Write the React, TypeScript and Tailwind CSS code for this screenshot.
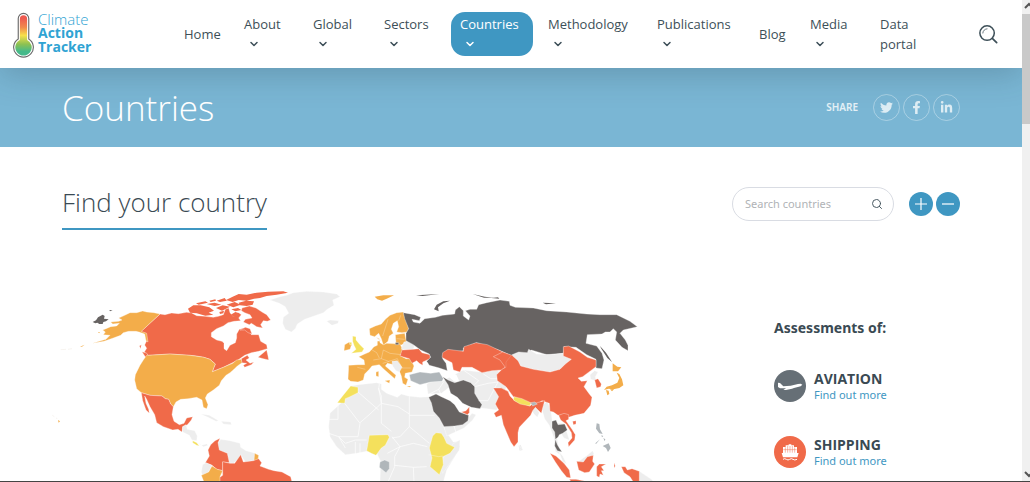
import { FaFacebookF, FaLinkedinIn, FaTwitter } from "react-icons/fa";
import { FiChevronDown, FiSearch } from "react-icons/fi";

type NavItemType = {
    label: string
    width: string
    menu?: boolean
    active?: boolean
}
const navItems: NavItemType[] = [
    { label: "Home", width: "w-[60px]" },
    { label: "About", width: "w-[69px]", menu: true },
    { label: "Global", width: "w-[71px]", menu: true },
    { label: "Sectors", width: "w-[76px]", menu: true },
    { label: "Countries", width: "w-[88px]", menu: true, active: true },
    { label: "Methodology", width: "w-[109px]", menu: true },
    { label: "Publications", width: "w-[102px]", menu: true },
    { label: "Blog", width: "w-[51px]" },
    { label: "Media", width: "w-[70px]", menu: true },
    { label: "Data portal", width: "w-[62px]" },
]

const Logo = () => (
    <a href="#home" className="flex w-[162px] shrink-0 items-center gap-1 pt-[2px] pl-[13px] text-[#2fa3d3]">
        <svg viewBox="0 0 64 138" className="h-[46px] w-[21px]" aria-hidden="true">
            <defs>
                <linearGradient id="thermo" x1="0" y1="0" x2="0" y2="1">
                    <stop offset="0.08" stopColor="#ee5b50" />
                    <stop offset="0.3" stopColor="#f18a4c" />
                    <stop offset="0.5" stopColor="#f7e04a" />
                    <stop offset="0.72" stopColor="#8cc152" />
                    <stop offset="0.9" stopColor="#45b98a" />
                </linearGradient>
            </defs>
            <path d="M16 19a16 16 0 0 1 32 0v62a30 30 0 1 1-32 0z" fill="#fff" stroke="#6b6b6b" strokeWidth="3.5" />
            <path d="M21 20a11 11 0 0 1 22 0v64a25 25 0 1 1-22 0z" fill="url(#thermo)" />
        </svg>
        <span className="pb-1 text-[14px] leading-[14px]">
            <span className="block text-[15px] font-light">Climate</span>
            <span className="block font-bold">Action</span>
            <span className="block font-bold">Tracker</span>
        </span>
    </a>
)

const NavItem = ({ item }: { item: NavItemType }) => (
    <li className={`shrink-0 ${item.width}`}>
        <a
            href="#nav"
            className={`block text-[13px] leading-5 ${item.active ? "mr-[6px] rounded-[14px] bg-[#3f97c2] py-[2px] pl-[9px] text-white" : "pl-[9px] pr-1"}`}
        >
            {item.label}
            {item.menu && (
                <span className="flex h-5 items-center pl-1">
                    <FiChevronDown className="h-3 w-3" strokeWidth={3} />
                </span>
            )}
        </a>
    </li>
)

const Header = () => (
    <header className="relative z-10 flex h-[68px] shrink-0 items-center bg-white text-[#3d4f58] shadow-[0_6px_32px_rgba(40,60,75,0.26)]">
        <Logo />
        <nav className="ml-[13px]">
            <ul className="flex items-center">
                {navItems.map((item) => (<NavItem key={item.label} item={item} />))}
            </ul>
        </nav>
        <button type="button" aria-label="Search" className="mr-6 ml-auto">
            <svg viewBox="0 0 20 20" className="h-[19px] w-[19px]" fill="none" stroke="currentColor" strokeLinecap="round">
                <circle cx="8.5" cy="8.5" r="7.6" strokeWidth="1.6" />
                <path d="M14 14l4.6 4.6" strokeWidth="1.8" />
                <path d="M4 8.5A4.5 4.5 0 0 1 8.5 4" strokeWidth="0.8" />
            </svg>
        </button>
    </header>
)

const shareLinks = [
    { label: "Twitter", Icon: FaTwitter },
    { label: "Facebook", Icon: FaFacebookF },
    { label: "LinkedIn", Icon: FaLinkedinIn },
]

const Hero = () => (
    <div className="flex h-[79px] shrink-0 items-center justify-between bg-[#7ab6d4] px-[62px] text-white">
        <h1 className="text-[35px] leading-10 font-light">Countries</h1>
        <div className="flex items-center gap-[3px]">
            <span className="mr-3 font-['Noto_Sans',sans-serif] text-[10px] font-semibold text-white/80">SHARE</span>
            {shareLinks.map(({ label, Icon }) => (
                <a key={label} href="#share" aria-label={label} className="flex h-[27px] w-[27px] items-center justify-center rounded-full border border-white/35 text-white/75">
                    <Icon className="h-[13px] w-[13px]" />
                </a>
            ))}
        </div>
    </div>
)

const SearchRow = () => (
    <div className="flex items-start justify-between px-[62px] pt-10">
        <h2 className="border-b-2 border-[#3f97c2] pb-[10px] text-[26px] leading-[31px] font-light text-[#3a4a53]">Find your country</h2>
        <div className="flex items-center">
            <label className="mr-[15px] flex h-[34px] w-[162px] items-center rounded-full border border-[#d9dce3] pr-[10px] pl-3">
                <input type="text" aria-label="Search countries" placeholder="Search countries" className="min-w-0 flex-1 font-['Noto_Sans',sans-serif] text-[11px] outline-none placeholder:text-[#b0b3b6]" />
                <FiSearch className="h-3 w-3 text-[#4a5a63]" />
            </label>
            <button type="button" aria-label="Zoom in" className="mr-[3px] flex h-6 w-6 items-center justify-center rounded-full bg-[#3f97c2]">
                <svg viewBox="0 0 24 24" className="h-6 w-6" stroke="#fff" strokeWidth="1.2"><path d="M6 12h12M12 6v12" /></svg>
            </button>
            <button type="button" aria-label="Zoom out" className="flex h-6 w-6 items-center justify-center rounded-full bg-[#3f97c2]">
                <svg viewBox="0 0 24 24" className="h-6 w-6" stroke="#fff" strokeWidth="1.2"><path d="M6 12h12" /></svg>
            </button>
        </div>
    </div>
)

const grey = "#ededed"
const red = "#f06a49"
const amber = "#f3ad4a"
const yellow = "#f4e05c"
const dark = "#676362"
const steel = "#b0b6ba"

const WorldMap = () => (
    <svg viewBox="0 0 2169 606" className="w-full" role="img" aria-label="World map of climate ratings" stroke="#fff" strokeWidth="1" strokeLinejoin="round">
        {/* North America */}
        <g>
            <path fill={red} d="M330 102L345 104 365 99 385 101 410 97 425 99 440 107 465 109 490 112 505 109 520 104 526 88 536 84 540 98 548 108 560 106 566 98 574 104 566 114 572 122 552 124 534 128 520 138 500 146 484 158 484 170 500 180 516 184 522 190 522 206 530 212 540 196 556 188 560 174 560 162 568 148 584 144 598 150 604 164 626 164 632 184 650 194 652 206 626 214 604 218 584 226 564 240 540 252 520 262 487 275 492 262 496 252 480 238 462 232 440 228 420 226 360 222 295 226 283 216 290 205 284 195 290 182 288 160 270 157z" />
            <path fill={red} d="M574 236L592 226 598 234 588 240 600 250 612 246 604 254 584 262 580 256 590 250 574 248zM624 232L650 210 654 228 656 240 640 236zM276 215l15 5 5 10-10 1zM268 198l6-4-2 12z" />
            <path fill={red} d="M576 84L598 78 618 84 636 96 650 104 662 120 652 124 640 122 632 134 638 144 620 140 604 130 598 134 580 126 586 118 606 114 600 104 584 98 574 92zM570 150l16-8 14 4 6 16-12-4-10-8z" />
            <path fill={red} stroke="none" d="M528 60L548 50 566 42 590 44 620 38 654 35 700 34 714 38 680 44 650 48 630 54 612 56 590 62 566 60 548 66zM566 68L588 62 612 64 608 74 590 78 570 76zM414 86L430 76 452 76 478 82 492 92 476 98 490 104 466 107 440 100 420 98zM470 72l24-4 20 6-20 4zM498 84l20-8 22 4-24 12zM438 70l28-6 8 4-28 6zM530 74l24-8 18 8-22 8zM500 62l24-8 6 8-20 4zM540 106l16-10 12 4-10 10zM544 88l20-4 10 6-18 4zM478 62l18-4 2 4-16 4zM508 96l14-4-2 8-10 2z" />
            <path fill={amber} d="M330 102L312 98 290 96 278 93 260 98 240 98 224 106 206 114 216 120 206 124 182 126 188 132 208 130 200 138 182 140 168 146 158 150 166 156 160 164 180 166 168 178 140 186 128 190 162 184 190 174 212 166 220 158 236 154 258 154 270 157 284 162 288 182 294 186 290 160 274 154z" />
            <path fill={amber} d="M290 226L295 226 360 222 420 226 462 232 480 238 496 252 492 262 487 275 520 262 548 250 560 240 574 238 576 248 562 258 552 268 540 278 528 286 514 302 508 316 490 330 472 342 466 354 474 374 470 386 460 382 456 360 440 352 414 356 392 358 378 366 370 380 362 372 356 358 346 356 336 348 300 346 274 338 260 326 254 300 256 284 270 256 280 240z" />
            <path fill={red} d="M274 338L300 346 336 348 346 356 356 358 362 372 370 380 366 404 372 424 388 434 402 430 410 414 428 410 424 420 412 434 398 440 396 456 384 448 368 450 340 440 320 428 314 404 300 380 290 358 284 348 288 370 296 388 298 400 288 390 278 362z" />
            <path fill={grey} d="M398 440l10-6 4 14 22 4 8 16-2 14-14-2-8-14-20-10zM440 486l10 6 10 8 14-4-4-4-16 4zM452 402l26 4 28 16-8 2-24-12zM514 424l28 2 2 8-24-2z" />
            <path fill={yellow} d="M428 482l12 6 8 10-8-2-12-8z" />
            <path fill={dark} stroke="none" d="M128 126l10-5 6-9 14-8 6 4-2 8 14 2-8 6-8 2-2 6-10 0-6-4-6 2zM178 90l10 1-8 3z" />
            <path fill={amber} stroke="none" d="M24 420l6 4-4 4zM144 156l6 1-3 3zM90 200l14-6-8 6z" />
            <path fill="none" d="M32 209l16-1M54 208l12-2M7 406l6 4M18 414l4 2" stroke="#e6ddd0" />
        </g>
        {/* Greenland and South America */}
        <g transform="translate(420 0)">
            <path fill={grey} d="M240 60L270 50 290 46 310 38 350 34 400 36 440 42 450 50 428 60 432 76 412 88 400 98 372 108 344 118 322 132 316 146 304 156 286 148 278 130 280 112 296 100 286 80 268 70zM410 124l10-4 26 2-2 8-18 6z" />
            <path fill={grey} d="M92 478L120 482 150 490 152 502 168 512 190 518 200 524 192 542 166 546 154 528 130 550 116 548 112 520 86 510 84 490z" />
            <path fill={red} d="M90 475L75 482 62 494 54 510 58 528 46 548 66 556 80 568 98 572 98 546 118 548 112 520 88 510 84 488z" />
            <path fill={grey} d="M48 548l18 8-10 20-18 10-4-10 4-22z" />
            <path fill={amber} d="M34 586l22-10 10-18 16 10 16 4-8 18 4 16H42zM194 520l12 6-2 14-12 2z" />
            <path fill={red} d="M98 545L120 550 134 550 152 524 160 546 190 542 206 536 215 548 210 558 236 568 252 572 276 576 302 590 306 606 90 606 90 592 98 586z" />
        </g>
        {/* Europe and West Africa */}
        <g transform="translate(810 0)">
            <path fill={grey} d="M92 318L116 314 170 308 184 312 184 328 200 340 232 352 244 342 264 348 300 352 330 350 340 380 362 420 376 452 400 486 414 484 420 500 404 530 380 570 370 606 180 606 182 544 170 520 140 514 110 520 76 524 50 500 30 470 26 440 30 400 64 368z" />
            <path fill={yellow} d="M92 318L114 322 114 338 90 350 76 356 74 370 52 368 66 350z" />
            <path fill="none" strokeWidth="2" d="M114 336l62 54M176 324l8 46 50 10 34 22M178 312l-2 16 8 20v22l-34 32-30 26M54 372v46H26M74 370l46 60-6 40H56M184 370v60l30 24M268 348v58h76M268 406v34l-28 30-24 4M216 470l24 30-38 20M268 440l60 50M240 500l40-10 42 10M26 460l30 10 20 34M56 470l20 20 30-10 34 0M106 486v36M120 490v30M240 500l-16 30v30l-20 46M224 556l56 6 2 44M280 562l40-2" />
            <path fill={yellow} d="M148 466L204 464 208 472 196 496 184 504 168 526 154 520 140 512z" />
            <path fill={steel} d="M180 546l14-6 14 6 0 20-10 12-20-16z" />
            <path fill={amber} d="M164 50l26-4 32 0-22 10-14 6-14-4z" stroke="none" />
            <path fill={amber} d="M250 96L230 98 210 106 196 118 184 132 166 138 148 146 150 166 164 170 176 160 184 176 190 196 204 184 208 168 220 160 214 148 220 130 232 122 236 140 230 156 246 158 262 156 266 146 260 124 254 110zM226 164l28-4 6 28-18 8-14-6z" />
            <path fill={amber} d="M168 172l10 4 2 12 10 6 10-4 40 2 8 16-6 20 16 8 14 0 10 22-6 18-20 4-2 12 10 6-6 18-10-6-4-22-8-20-14-14-20-4-6 8 14 12 18 16-4 10-16-14-18-16-12-12-22 4-8 10-14 14-4 18-16 6-22-2-8-6 2-42 28-2 20 0-2-14-16-10 18-8 14-6 14-16 10-4 0-12 10-2zM194 302l16-2-2 10zM168 276l8-2v16l-8-2zM260 318l14 0-6 4z" />
            <path fill={dark} d="M226 188h10v6h-10z" />
            <path fill={amber} d="M74 194l14-8 6 10-4 12-18 4z" />
            <path fill={yellow} d="M98 168l10 2 0 10 12 14 12 12-6 10-32 4 14-12-6-12-4-12zM88 188l6-2 2 8-6 1z" />
            <path fill={grey} d="M252 186l18-4 14 12-4 14-36 0 4-14zM216 244l16-2 14 20-8 14-10-4-10-14z" />
            <path fill={red} d="M246 210L280 208 296 206 306 218 330 224 330 236 308 246 308 256 298 250 290 242 276 250 268 236 240 228z" />
            <path fill="none" strokeWidth="1" opacity="0.8" d="M204 118l-16 50M236 122l6-16M150 206l20 12 8 16M160 240l24-4 6-26 20 10 34 4M184 236l22 8 26-8M188 250l20-6M76 262l8 6-4 38M112 262l24 6M232 236l14 28h26M230 176l24 2" />
        </g>
        {/* Russia, Middle East and Central Asia */}
        <g transform="translate(1050 0)">
            <path fill={grey} d="M80 312L96 304 128 304 140 296 190 270 240 276 290 270 330 300 310 340 290 390 244 384 200 374 150 320 124 340 84 342zM132 440l28-4 46-24 10-12 12 4-10 16-26 24-52 24zM160 490l20-10-2 30-50 70-10-30z" />
            <path fill="#fff" stroke="none" d="M132 252l18-6 12 12-6 18 14 10 10 22-18-4-16-14z" />
            <path fill={dark} d="M10 98L44 104 62 112 58 122 36 118 40 126 60 130 74 116 106 112 128 106 164 102 166 90 178 80 190 92 190 108 206 120 210 108 196 92 210 88 230 88 236 74 260 68 300 60 328 64 330 76 346 82 400 84 440 92 500 96 560 102 600 104 650 104 690 124 712 140 696 144 670 150 660 160 676 180 684 196 684 212 666 202 646 180 650 156 640 146 630 156 616 156 606 162 562 164 558 190 590 198 606 220 612 240 606 266 588 264 588 238 560 224 528 202 492 200 490 220 440 224 394 210 384 222 350 220 336 228 296 210 264 200 230 188 190 204 190 212 130 220 128 236 138 250 142 272 118 264 88 256 80 244 92 232 88 222 62 210 40 194 18 182 18 160 26 146 14 116z" />
            <path fill={dark} stroke="none" d="M102 88l8-14 20-10 20-2-20 8-16 12 2 12zM218 42l36 8 28 3-30 0zM274 54l20-2 4 4zM48 46l70-4-50 6zM600 198l18 20 18 28-14-12-18-28zM428 68l40 2-30 3z" />
            <path fill={red} d="M128 218L144 208 190 214 192 200 228 188 262 194 296 210 330 226 334 226 330 240 320 258 306 270 276 272 246 278 216 262 186 262 180 276 160 270 156 248 140 240 126 232z" />
            <path fill={steel} d="M28 284L60 276 92 280 118 276 130 296 126 304 92 306 60 314 32 302z" />
            <path fill={dark} d="M128 290L144 300 164 308 190 300 212 308 224 320 224 340 236 360 246 374 240 386 214 382 188 370 172 352 152 340 144 314zM86 352L108 342 124 350 150 362 164 374 178 396 206 406 204 422 188 434 164 438 132 440 118 414 100 394 94 368z" />
            <path fill={red} d="M184 396l14-4 10-12v18l-6 6z" />
            <path fill={grey} d="M356 498l6-4 6 16-8 2z" stroke="none" />
            <path fill="none" strokeWidth="2" d="M190 270l46 32-12 12M224 320l40-10 30-4 10-30M236 362h28l16-30 14-26M250 282l22 14 34 0M84 344l32-16 16-24M116 328l10 22M162 438l8 26" />
            <path fill={yellow} d="M98 468l10-10 16 2 8 12 8 18 24 12-14 18-22 10 2 24-12 30-28-24 6-26-8-30z" />
            <path fill="none" d="M86 524l30 6 12-2" />
        </g>
        {/* South and East Asia */}
        <g transform="translate(1350 0)">
            <path fill={grey} d="M36 224L56 216 82 218 86 208 110 222 150 224 190 220 214 238 196 252 180 268 150 276 100 268 60 258zM270 284l14-12 10 4-8 14 2 12-16-4zM94 384l14 0 10 14-6 14-12-12zM126 376l16-12 10 26 6 40 34 0 16 50-16-6-10-16-12 10 10 56-14-10-4-40-14-38-14-20-6-20zM228 550l34-24 16-14 4 10-22 26zM418 574l36 24 8 8h-44zM176 514l12 14 12 24-12-8zM56 494l8 12-6 8z" />
            <path fill={red} d="M-20 230L8 216 36 226 54 242 62 258 100 268 150 276 180 268 196 252 214 238 190 228 190 200 206 198 240 216 262 232 288 240 288 260 264 278 248 290 234 294 244 304 262 302 252 320 268 342 276 352 272 376 252 400 224 406 206 412 190 404 174 406 160 396 150 394 148 370 126 362 112 372 90 372 40 350 18 320-8 302-10 284 6 268 16 262 0 240z" />
            <path fill={red} d="M-20 324L4 324 24 334 30 348 44 362 90 378 96 372 134 362 128 384 124 400 114 390 106 382 98 392 92 406 58 442 54 458 54 486 42 500 32 486 10 434 4 406-12 412-18 400-4 390-14 372-4 350z" />
            <path fill={yellow} d="M42 350l24 6 26 12-2 10-30-6-20-12z" />
            <path fill={steel} d="M92 368l12-2 8 6-14 6z" />
            <path fill={dark} d="M156 424l12-4 6 14 20-2 8 18-14 10-10 4-4 8-8 6 6 16 6 10 8 12-14-4-8-14 2-20-2-22-8-12z" />
            <path fill={red} d="M176 406l16-6 14 4 0 14-8 4 18 26 10 16-2 16-18 20-2-12 12-14-2-16-16-26-16-12zM218 424l10-2v10l-8 2zM284 300l10-4 10 16-2 8-12 4z" />
            <path fill={amber} stroke="none" d="M338 250l14 10 12 2-10 12-16 0zM350 278l8 4 8 16 4 18-12 8-18 4-14-2-14 4 8-10 16-4 16-8 6-14zM318 330l8 2 2 10-6 4zM330 328l12 0-6 6z" />
            <path fill={steel} stroke="none" d="M290 430l8 2 2 16 8 14-10-2-10-14zM310 474l6 4-2 6zM304 466l6 2-4 4zM308 498l18-8 6 14-8 12-6-12zM286 490l14-12-12 14z" />
            <path fill={red} d="M150 520L168 528 192 550 208 570 212 594 200 592 184 572 166 546zM230 544L250 546 262 530 280 526 278 544 284 552 268 576 254 578 236 570zM290 560l8-8 20 0-14 8 8 12-8 0 6 14-10-4-2 10-8-4zM342 548l4 10-4 6zM364 560l12 0 6 10 14-4 22 8v32h-18l-10-16-18-12zM208 598l20 0 30 6-44 2z" />
            <path fill="none" stroke="#f6a58f" strokeWidth="1" d="M34 226l-16 20 0 16M16 262l-10 6M2 322l24 14" />
        </g>
    </svg>
)

const PlaneIcon = () => (
    <svg viewBox="0 0 96 96" className="h-8 w-8" aria-hidden="true">
        <path fill="#fff" d="M12 38l6 1 10 10 22-2 22-5 8-1 5 3-5 5-20 5-6 2-18 4-8 0 8-5-18 0-6-4z" />
    </svg>
)
const ShipIcon = () => (
    <svg viewBox="0 0 96 96" className="h-8 w-8" aria-hidden="true">
        <path fill="#fff" d="M44 25h8v3h8v5h9v18h5l-4 13H27l-4-13h4V33h8v-5h9z" />
        <path fill="none" stroke="#f06a49" strokeWidth="1.4" d="M34 34v16M41 30v20M48 30v20M55 30v20M62 34v16M28 41h40" />
        <path fill="none" stroke="#fff" strokeWidth="3" d="M27 70q5-4 10 0t10 0 10 0 12 0" />
    </svg>
)

const assessments = [
    { title: "AVIATION", color: "bg-[#666f76]", Icon: PlaneIcon },
    { title: "SHIPPING", color: "bg-[#f06a49]", Icon: ShipIcon },
]

const Assessments = () => (
    <aside className="w-[249px] shrink-0 pt-[38px] pl-[1px] font-['Noto_Sans',sans-serif] text-[#3a4a53]">
        <h3 className="mb-[31px] text-[14px] leading-5 font-bold">Assessments of:</h3>
        {assessments.map(({ title, color, Icon }) => (
            <div key={title} className="mb-8 flex h-[34px] items-center gap-2">
                <span className={`rounded-full ${color}`}><Icon /></span>
                <div>
                    <h4 className="font-['Open_Sans',sans-serif] text-[14px] leading-[17px] font-bold">{title}</h4>
                    <a href="#more" className="block text-[11px] leading-4 text-[#3f97c2]">Find out more</a>
                </div>
            </div>
        ))}
    </aside>
)

const Scrollbar = () => (
    <div className="flex w-2 shrink-0 flex-col items-end overflow-hidden bg-[#f0f0f0] text-[#555]">
        <svg viewBox="0 0 8 14" className="h-[14px] w-2 shrink-0" fill="none" stroke="currentColor" strokeWidth="2"><path d="M3 8l4-4 4 4" /></svg>
        <div className="h-[110px] w-full shrink-0 bg-[#c9c9c9]" />
        <svg viewBox="0 0 8 14" className="mt-auto h-[14px] w-2 shrink-0" fill="none" stroke="currentColor" strokeWidth="2"><path d="M3 5l4 4 4-4" /></svg>
    </div>
)

const App = () => {
    return (
        <div className="flex h-screen overflow-hidden border-b border-[#444] bg-white font-['Open_Sans','Noto_Sans',sans-serif]">
            <div className="flex min-w-0 flex-1 flex-col overflow-hidden">
                <Header />
                <Hero />
                <main>
                    <SearchRow />
                    <div className="mt-[50px] flex items-start pl-[50px]">
                        <div className="min-w-0 flex-1"><WorldMap /></div>
                        <Assessments />
                    </div>
                </main>
            </div>
            <Scrollbar />
        </div>
    );
}
export default App;
